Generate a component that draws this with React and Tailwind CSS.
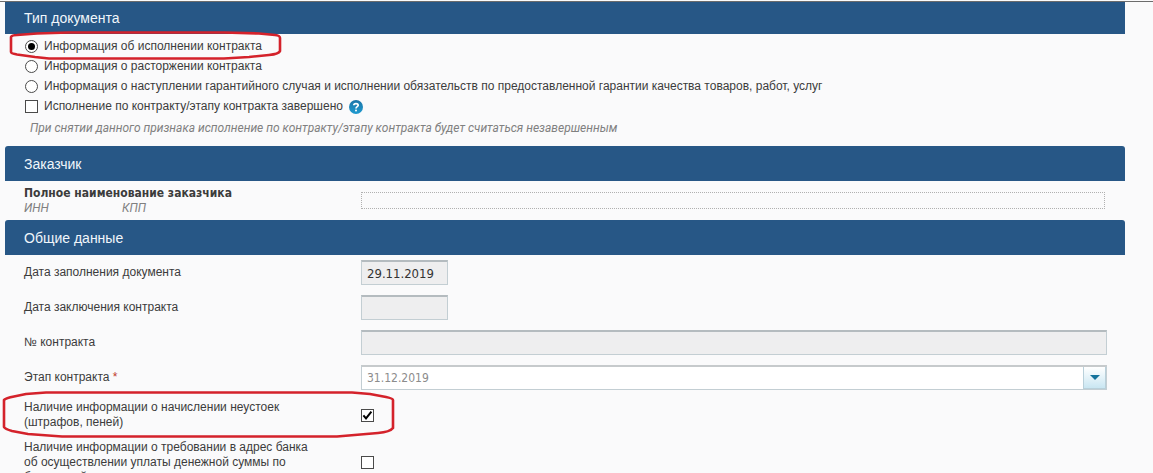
import { useState } from 'react';

const DOC_TYPES = [
  { id: 'execution', label: 'Информация об исполнении контракта', marked: true },
  { id: 'termination', label: 'Информация о расторжении контракта' },
  {
    id: 'warranty',
    label:
      'Информация о наступлении гарантийного случая и исполнении обязательств по предоставленной гарантии качества товаров, работ, услуг',
  },
];

const SectionHeader = ({ children, first }) => (
  <h2
    className={`flex items-center bg-[#275786] pl-[19px] text-[14px] leading-[20px] text-[#f0f6fb] ${
      first ? 'h-8' : 'h-[35px] rounded-t-[3px]'
    }`}
  >
    {children}
  </h2>
);

const Checkbox = ({ id, checked, onChange }) => (
  <span className="relative block h-[13px] w-[13px] shrink-0">
    <input
      id={id}
      type="checkbox"
      checked={checked}
      onChange={onChange}
      className="peer block h-[13px] w-[13px] appearance-none border border-[#4a4a4a] bg-white"
    />
    <svg
      viewBox="0 0 13 13"
      className="pointer-events-none absolute inset-0 hidden h-full w-full peer-checked:block"
    >
      <path d="M2.4 6.4 L5 9.4 L10.4 2.6" fill="none" stroke="#000" strokeWidth="2" />
    </svg>
  </span>
);

const HelpIcon = () => (
  <svg viewBox="0 0 14 14" className="block h-[14px] w-[14px]">
    <defs>
      <linearGradient id="help-bg" x1="0" y1="0" x2="0" y2="1">
        <stop offset="0" stopColor="#1c75a8" />
        <stop offset="1" stopColor="#1f9bd0" />
      </linearGradient>
    </defs>
    <circle cx="7" cy="7" r="7" fill="url(#help-bg)" />
    <path
      d="M4.8 5.3 C4.8 3.1 9.2 3.1 9.2 5.3 C9.2 6.7 7 6.6 7 8.5"
      fill="none"
      stroke="#fff"
      strokeWidth="1.7"
    />
    <circle cx="7" cy="10.5" r="1" fill="#fff" />
  </svg>
);

// Red marker outline around a highlighted row
const SmallMark = () => (
  <svg
    viewBox="0 0 274 30"
    className="pointer-events-none absolute -left-4 -top-2 h-[30px] w-[274px] max-w-none"
  >
    <path
      d="M8 4 L28 2.5 L60 1.5 H215 L250 2.5 L266 4 Q271 4.5 271 7 V20 Q270 23 260 24 L240 26 L215 27.5 H40 L26 26 L8 23.5 Q2 22.5 2 21 V6 Q3 4 8 4 Z"
      fill="none"
      stroke="#d4222b"
      strokeWidth="2.6"
      strokeLinejoin="round"
    />
  </svg>
);

const LargeMark = () => (
  <svg
    viewBox="0 0 394 49"
    className="pointer-events-none absolute -left-[22px] -top-[5px] h-[49px] w-[394px] max-w-none"
  >
    <path
      d="M12 6.5 L24 4 L44 2.5 H350 L368 4 L384 7 Q391 8.5 391 10 V38 Q388 42 376 43 L335 46.5 H60 L26 44 L10 41 Q3 39 2 37 V10 Q4 8 12 6.5 Z"
      fill="none"
      stroke="#d4222b"
      strokeWidth="2.6"
      strokeLinejoin="round"
    />
  </svg>
);

const FormRow = ({ id, label, required, mark, children }) => (
  <div className="relative flex items-center py-[5px]">
    <label htmlFor={id} className="w-[337px] shrink-0 pr-[42px]">
      {label}
      {required && <span className="text-[#c0392b]"> *</span>}
    </label>
    {children}
    {mark}
  </div>
);

const INPUT_CLASS =
  "h-[25px] border border-t-2 border-[#c3ced3] border-t-[#b4bbbf] bg-[#eeeeef] px-[5px] font-['DejaVu_Sans_Condensed','DejaVu_Sans',sans-serif] text-[13px] text-[#333]";

export default function App() {
  const [docType, setDocType] = useState('execution');
  const [finished, setFinished] = useState(false);
  const [penalties, setPenalties] = useState(true);
  const [bankClaim, setBankClaim] = useState(false);

  return (
    <div className="h-screen overflow-hidden bg-[#fafafb] pt-px font-['Liberation_Sans',Arial,sans-serif] text-[12px] leading-[15px] text-[#3c3c3c]">
      <main className="border-t border-[#6c6c6c] pl-[5px] pr-7">
        <section>
          <SectionHeader first>Тип документа</SectionHeader>
          <div className="flex h-28 flex-col gap-[5px] pl-5 pt-[5px]">
            {DOC_TYPES.map((type) => (
              <div key={type.id} className="relative flex items-center gap-[6px]">
                <input
                  id={type.id}
                  type="radio"
                  name="doc-type"
                  checked={docType === type.id}
                  onChange={() => setDocType(type.id)}
                  className="flex h-[13px] w-[13px] shrink-0 appearance-none items-center justify-center rounded-full border border-[#4a4a4a] bg-white checked:before:h-[7px] checked:before:w-[7px] checked:before:rounded-full checked:before:bg-black"
                />
                <label htmlFor={type.id}>{type.label}</label>
                {type.marked && <SmallMark />}
              </div>
            ))}
            <div className="flex items-center gap-[6px]">
              <Checkbox id="finished" checked={finished} onChange={() => setFinished(!finished)} />
              <label htmlFor="finished">Исполнение по контракту/этапу контракта завершено</label>
              <button type="button" aria-label="Справка">
                <HelpIcon />
              </button>
            </div>
            <p className="pl-[5px] pt-0.5 font-['Roboto',sans-serif] italic text-[#808080]">
              При снятии данного признака исполнение по контракту/этапу контракта будет считаться незавершенным
            </p>
          </div>
        </section>

        <section>
          <SectionHeader>Заказчик</SectionHeader>
          <div className="flex h-[39px] items-center pl-[19px] pr-5">
            <div className="w-[337px] shrink-0">
              <p className="font-['DejaVu_Sans_Condensed','DejaVu_Sans',sans-serif] font-bold">
                Полное наименование заказчика
              </p>
              <p className="flex font-['Roboto',sans-serif] italic text-[#808080]">
                <span className="w-[98px]">ИНН</span>
                <span>КПП</span>
              </p>
            </div>
            <div className="h-[17px] flex-1 border border-dotted border-[#b0b0b0]" />
          </div>
        </section>

        <section>
          <SectionHeader>Общие данные</SectionHeader>
          <div className="pl-[19px] pr-[18px]">
            <FormRow id="fill-date" label="Дата заполнения документа">
              <input id="fill-date" readOnly defaultValue="29.11.2019" className={`${INPUT_CLASS} w-[87px]`} />
            </FormRow>
            <FormRow id="sign-date" label="Дата заключения контракта">
              <input id="sign-date" readOnly className={`${INPUT_CLASS} w-[87px]`} />
            </FormRow>
            <FormRow id="number" label="№ контракта">
              <input id="number" readOnly className={`${INPUT_CLASS} min-w-0 flex-1`} />
            </FormRow>
            <FormRow id="stage" label="Этап контракта" required>
              <div className="relative flex-1">
                <select
                  id="stage"
                  className="block h-[25px] w-full appearance-none border border-t-2 border-[#c3ced3] border-t-[#c6cacc] bg-white px-[5px] font-['DejaVu_Sans_Condensed','DejaVu_Sans',sans-serif] text-[12px] text-[#8c8c8c]"
                >
                  <option>31.12.2019</option>
                </select>
                <span className="pointer-events-none absolute bottom-px right-px top-[2px] flex w-[23px] items-center justify-center border border-t-0 border-[#b9d0da] bg-gradient-to-b from-white to-[#c9e6f2]">
                  <svg viewBox="0 0 10 5" className="h-[5px] w-[10px]">
                    <path d="M0 0 H10 L5 5 Z" fill="#14739c" />
                  </svg>
                </span>
              </div>
            </FormRow>
            <FormRow
              id="penalties"
              label="Наличие информации о начислении неустоек (штрафов, пеней)"
              mark={<LargeMark />}
            >
              <Checkbox id="penalties" checked={penalties} onChange={() => setPenalties(!penalties)} />
            </FormRow>
            <FormRow
              id="bank-claim"
              label="Наличие информации о требовании в адрес банка об осуществлении уплаты денежной суммы по банковской гарантии"
            >
              <Checkbox id="bank-claim" checked={bankClaim} onChange={() => setBankClaim(!bankClaim)} />
            </FormRow>
          </div>
        </section>
      </main>
    </div>
  );
}
